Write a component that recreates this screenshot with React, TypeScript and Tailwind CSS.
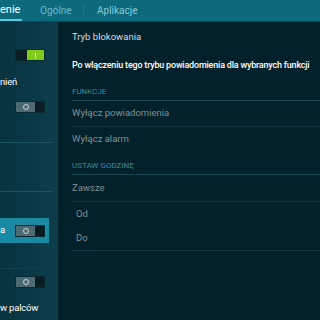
import React from "react";

function Toggle({ on }: { on?: boolean }) {
  if (on) {
    return (
      <div className="flex h-[12px] w-[30px] shrink-0 border border-[#0a2a33]">
        <div className="w-[11px] bg-[#0b1d22]" />
        <div className="flex flex-1 items-center justify-center bg-[#7fcc1c]">
          <div className="h-[5px] w-px bg-[#e6f7c8]" />
        </div>
      </div>
    );
  }
  return (
    <div className="flex h-[12px] w-[30px] shrink-0 border border-[#0a2a33]">
      <div className="flex w-[19px] items-center justify-center bg-[#4d6b73]">
        <div className="h-[6px] w-[6px] rounded-full border border-[#c8d6da]" />
      </div>
      <div className="flex-1 bg-[#0b1d22]" />
    </div>
  );
}

function SectionHead({ children, h }: { children: React.ReactNode; h: string }) {
  return (
    <div className={`flex ${h} items-end border-b border-[#1c4855] pb-[2px] text-[8px] uppercase text-[#3f8aa0]`}>
      {children}
    </div>
  );
}

function Item({ label, h, indent, line = true }: { label: string; h: string; indent?: boolean; line?: boolean }) {
  return (
    <div
      className={`flex ${h} items-center text-[9.5px] text-[#7e9296] ${indent ? "pl-[4px]" : ""} ${
        line ? "border-b border-[#12343f]" : ""
      }`}
    >
      {label}
    </div>
  );
}

export default function App() {
  return (
    <div
      className="flex h-[320px] w-[320px] flex-col overflow-hidden bg-[#03212b]"
      style={{ fontFamily: "Roboto, 'Noto Sans', sans-serif" }}
    >
      {/* zakładki */}
      <div className="flex h-[22px] shrink-0 items-stretch border-b border-[#0a4d5a] bg-[#0c6a7c] text-[10px]">
        <div className="relative flex w-[23px] items-center overflow-hidden text-[11px] text-white">
          <span className="whitespace-nowrap">enie</span>
          <div className="absolute bottom-0 left-0 h-[2px] w-[22px] bg-[#62c6dc]" />
        </div>
        <div className="flex w-[60px] items-center pl-[17px] text-[#6db7c6]">Ogólne</div>
        <div className="my-[5px] w-px bg-[#1a7c8e]" />
        <div className="flex items-center pl-[13px] text-[#8cc7d3]">Aplikacje</div>
      </div>

      <div className="flex flex-1">
        {/* lewa kolumna */}
        <div className="flex w-[58px] shrink-0 flex-col border-r border-[#0f3d49] bg-gradient-to-r from-[#083341] to-[#0d3d4b] text-[9.5px] tracking-[-0.2px] text-white">
          <div className="flex h-[45px] items-start justify-end pt-[27px] pr-[12px]">
            <Toggle on />
          </div>
          <div className="flex h-[30px] items-center">nień</div>
          <div className="mr-[4px] flex h-[46px] items-start justify-end border-b border-[#1c5261] pt-[4px] pr-[8px]">
            <Toggle />
          </div>
          <div className="mr-[4px] h-[49px] border-b border-[#1c5261]" />
          <div className="h-[26px]" />
          <div className="mr-[8px] flex h-[25px] items-center justify-between bg-[#1a8aa4] pr-[4px]">
            <span>a</span>
            <Toggle />
          </div>
          <div className="mr-[4px] h-[26px] border-b border-[#12414e]" />
          <div className="flex h-[25px] items-start justify-end pt-[7px] pr-[12px]">
            <Toggle />
          </div>
          <div className="flex h-[28px] items-center whitespace-nowrap">w palców</div>
        </div>

        {/* prawa kolumna */}
        <div className="flex-1 pl-[14px]">
          <div className="flex h-[30px] items-center text-[9.5px] text-[#d3dde0]">Tryb blokowania</div>
          <div className="flex h-[28px] items-center whitespace-nowrap text-[9px] font-medium tracking-[-0.2px] text-white">
            Po włączeniu tego trybu powiadomienia dla wybranych funkcji
          </div>
          <SectionHead h="h-[21px]">Funkcje</SectionHead>
          <Item label="Wyłącz powiadomienia" h="h-[26px]" />
          <Item label="Wyłącz alarm" h="h-[25px]" line={false} />
          <SectionHead h="h-[23px]">Ustaw godzinę</SectionHead>
          <Item label="Zawsze" h="h-[27px]" />
          <Item label="Od" h="h-[24px]" indent line={false} />
          <Item label="Do" h="h-[25px]" indent />
        </div>
      </div>
    </div>
  );
}
